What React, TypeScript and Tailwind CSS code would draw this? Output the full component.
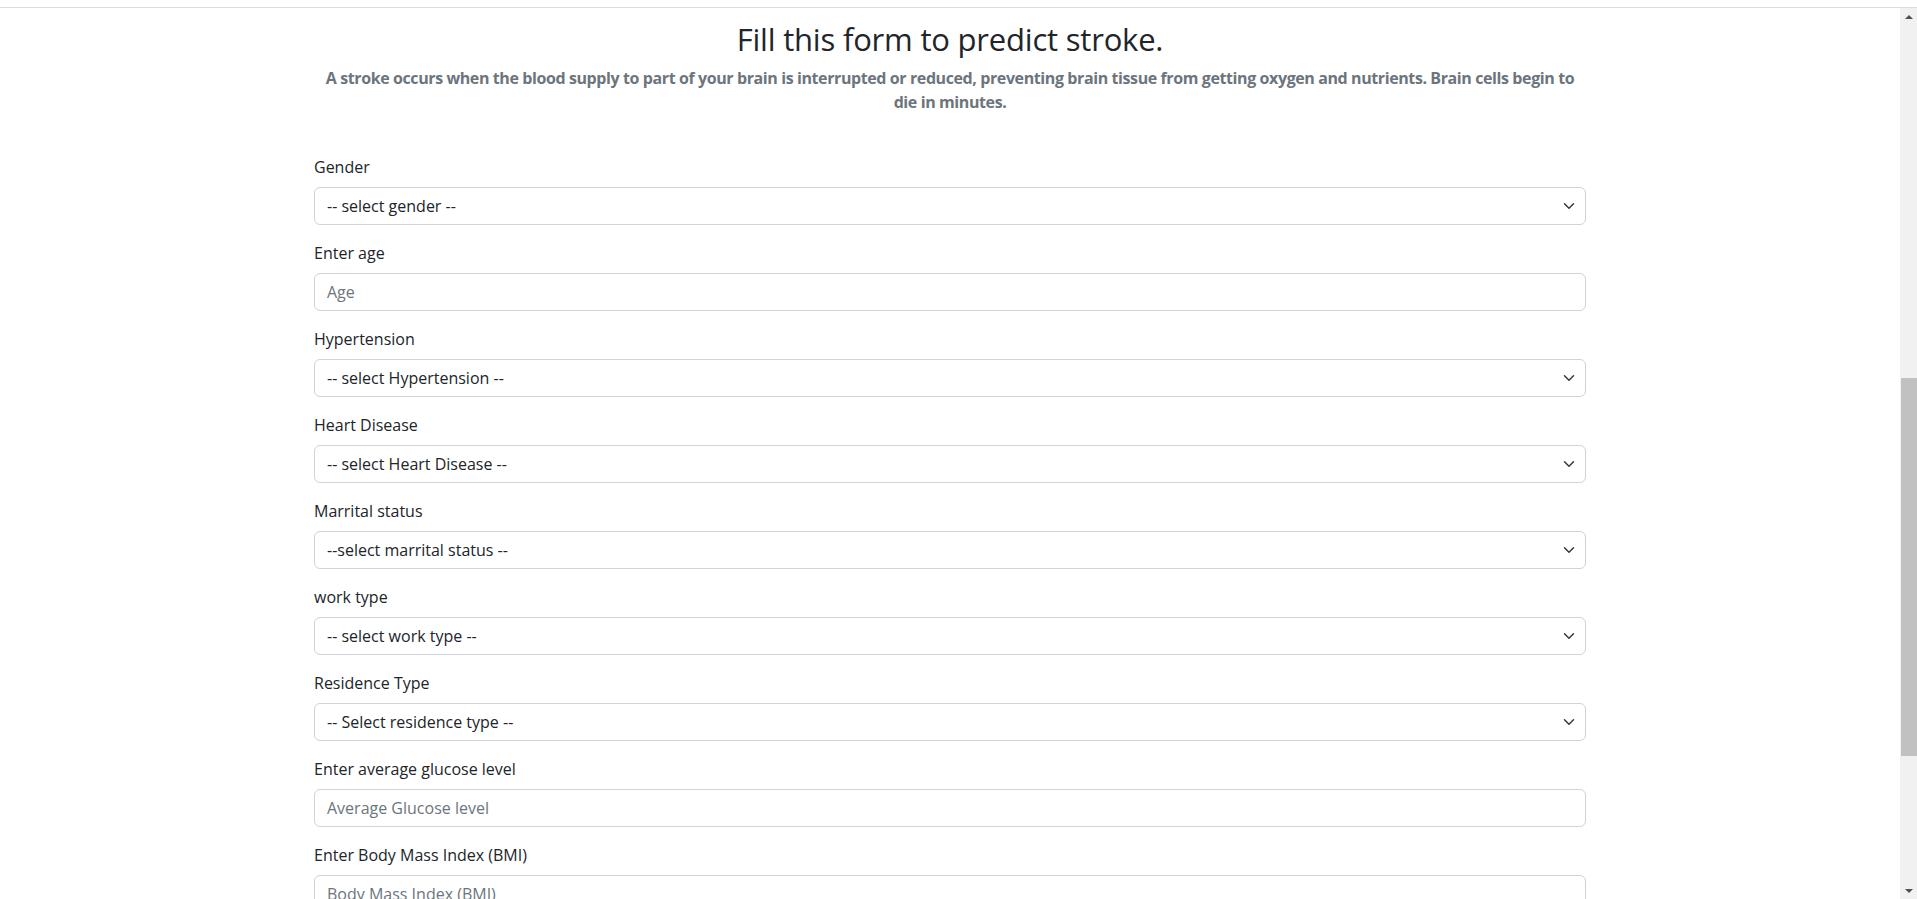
import React from 'react'

type Field = {
    label: string
    kind: 'select' | 'input'
    text: string
}

const fields: Field[] = [
    { label: 'Gender', kind: 'select', text: '-- select gender --' },
    { label: 'Enter age', kind: 'input', text: 'Age' },
    { label: 'Hypertension', kind: 'select', text: '-- select Hypertension --' },
    { label: 'Heart Disease', kind: 'select', text: '-- select Heart Disease --' },
    { label: 'Marrital status', kind: 'select', text: '--select marrital status --' },
    { label: 'work type', kind: 'select', text: '-- select work type --' },
    { label: 'Residence Type', kind: 'select', text: '-- Select residence type --' },
    { label: 'Enter average glucose level', kind: 'input', text: 'Average Glucose level' },
    { label: 'Enter Body Mass Index (BMI)', kind: 'input', text: 'Body Mass Index (BMI)' },
]

const Chevron = () => (
    <svg width="16" height="12" viewBox="0 0 16 16" fill="none" stroke="#343a40" strokeWidth="2" strokeLinecap="round" strokeLinejoin="round">
        <path d="m2 5 6 6 6-6" />
    </svg>
)

const FormField = ({ field }: { field: Field }) => {
    return (
        <div className="mb-4">
            <label className="block mb-2 text-[16px] leading-6 text-[#212529]">{field.label}</label>
            {field.kind === 'select' ? (
                <div className="flex items-center justify-between h-[38px] px-3 border border-[#ced4da] rounded-[6px] bg-white text-[16px] text-[#212529]">
                    <span>{field.text}</span>
                    <span className="mr-[-4px]"><Chevron /></span>
                </div>
            ) : (
                <div className="flex items-center h-[38px] px-3 border border-[#ced4da] rounded-[6px] bg-white text-[16px] text-[#6c757d]">
                    {field.text}
                </div>
            )}
        </div>
    )
}

const App = () => {
    return (
        <div className="h-[899px] overflow-hidden bg-white flex flex-col" style={{ fontFamily: '"Open Sans", "Noto Sans", sans-serif' }}>
            <div className="h-[8px] shrink-0 border-b border-[#dcdcdc] bg-white"></div>
            <div className="flex flex-1 min-h-0">
                <main className="flex-1 overflow-hidden">
                    <div className="w-[1272px] mx-auto">
                        <h2 className="text-center text-[31px] leading-[38px] font-normal tracking-[-0.2px] text-[#212529] mt-[12px] mb-2">
                            Fill this form to predict stroke.
                        </h2>
                        <p className="text-center text-[16px] leading-6 font-bold tracking-[-0.4px] text-[#6c757d]">
                            A stroke occurs when the blood supply to part of your brain is interrupted or reduced, preventing brain tissue from getting oxygen and nutrients. Brain cells begin to
                            <br />
                            die in minutes.
                        </p>
                        <form className="mt-[41px]">
                            {fields.map((f) => (
                                <FormField key={f.label} field={f} />
                            ))}
                        </form>
                    </div>
                </main>
                <div className="w-[17px] shrink-0 bg-[#f1f1f1] flex flex-col">
                    <div className="h-[17px] flex items-center justify-center">
                        <div className="w-0 h-0 border-l-[4px] border-r-[4px] border-b-[4px] border-l-transparent border-r-transparent border-b-[#505050]"></div>
                    </div>
                    <div className="h-[353px]"></div>
                    <div className="h-[378px] ml-[1px] bg-[#c1c1c1]"></div>
                    <div className="flex-1"></div>
                    <div className="h-[17px] flex items-center justify-center">
                        <div className="w-0 h-0 border-l-[4px] border-r-[4px] border-t-[4px] border-l-transparent border-r-transparent border-t-[#505050]"></div>
                    </div>
                </div>
            </div>
        </div>
    )
}

export default App
